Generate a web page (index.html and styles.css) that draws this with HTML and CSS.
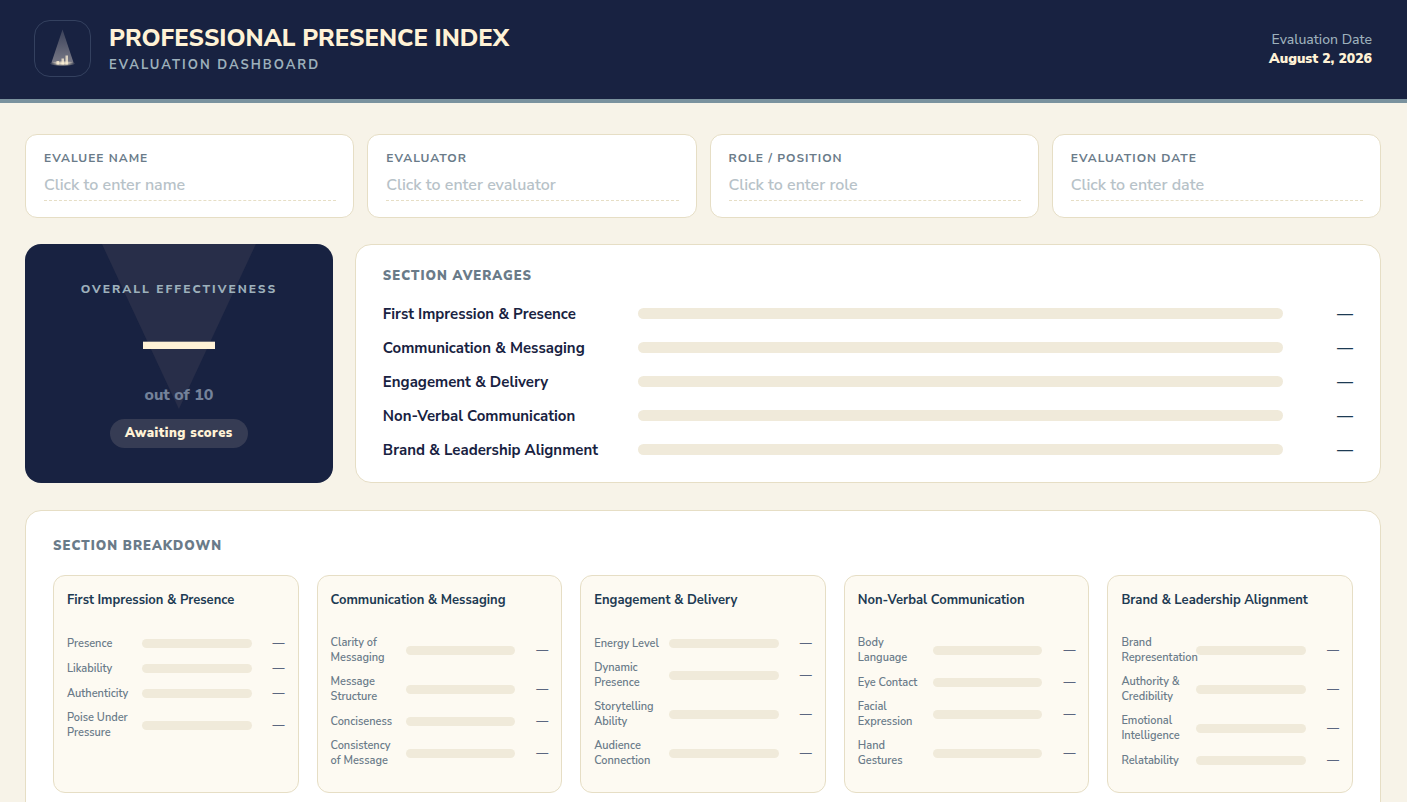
FILE: index.html
```html
<!DOCTYPE html>
<html lang="en">

<head>
    <meta charset="UTF-8">
    <meta name="viewport" content="width=device-width, initial-scale=1.0">
    <title>Professional Presence Index</title>
    <link rel="stylesheet" href="styles.css">
</head>

<body>
    <header class="header">
        <div class="logo">
            <svg width="32" height="42" viewBox="0 0 32 42" aria-hidden="true">
                <defs>
                    <linearGradient id="beam" x1="0" y1="0" x2="0" y2="1">
                        <stop offset="0" stop-color="#fff2e6" stop-opacity="0.15" />
                        <stop offset="1" stop-color="#fff2e6" stop-opacity="0.42" />
                    </linearGradient>
                    <radialGradient id="pool">
                        <stop offset="0" stop-color="#fff2d6" stop-opacity="0.9" />
                        <stop offset="0.5" stop-color="#fff2d6" stop-opacity="0.6" />
                        <stop offset="1" stop-color="#fff2d6" stop-opacity="0" />
                    </radialGradient>
                </defs>
                <path d="M15.5 1.5 L26.5 34.5 Q16 37 4.5 34.5 Z" fill="url(#beam)" />
                <ellipse cx="15.5" cy="35.5" rx="13" ry="2.8" fill="url(#pool)" />
                <g fill="#fff2d6" fill-opacity="0.75">
                    <rect x="9.5" y="33" width="2.5" height="3.5" />
                    <rect x="14.5" y="30.5" width="2.5" height="6" />
                    <rect x="18.5" y="27.5" width="2.5" height="9" />
                </g>
            </svg>
        </div>
        <div class="header_text">
            <h1>PROFESSIONAL PRESENCE INDEX</h1>
            <p>EVALUATION DASHBOARD</p>
        </div>
        <div class="header_date">
            <p>Evaluation Date</p>
            <strong>August 2, 2026</strong>
        </div>
    </header>

    <main class="page">
        <form class="fields">
            <div class="field">
                <label for="evaluee">EVALUEE NAME</label>
                <input type="text" id="evaluee" placeholder="Click to enter name">
            </div>
            <div class="field">
                <label for="evaluator">EVALUATOR</label>
                <input type="text" id="evaluator" placeholder="Click to enter evaluator">
            </div>
            <div class="field">
                <label for="role">ROLE / POSITION</label>
                <input type="text" id="role" placeholder="Click to enter role">
            </div>
            <div class="field">
                <label for="date">EVALUATION DATE</label>
                <input type="text" id="date" placeholder="Click to enter date">
            </div>
        </form>

        <div class="summary">
            <section class="overall">
                <h2>OVERALL EFFECTIVENESS</h2>
                <p class="score">—</p>
                <p class="out_of">out of 10</p>
                <span class="pill">Awaiting scores</span>
            </section>

            <section class="card averages">
                <h2 class="card_title">SECTION AVERAGES</h2>
                <div class="avg_row"><span>First Impression &amp; Presence</span><div class="track"></div><b>—</b></div>
                <div class="avg_row"><span>Communication &amp; Messaging</span><div class="track"></div><b>—</b></div>
                <div class="avg_row"><span>Engagement &amp; Delivery</span><div class="track"></div><b>—</b></div>
                <div class="avg_row"><span>Non-Verbal Communication</span><div class="track"></div><b>—</b></div>
                <div class="avg_row"><span>Brand &amp; Leadership Alignment</span><div class="track"></div><b>—</b></div>
            </section>
        </div>

        <section class="card breakdown">
            <h2 class="card_title">SECTION BREAKDOWN</h2>
            <div class="groups">
                <div class="group">
                    <h3>First Impression &amp; Presence</h3>
                    <div class="row"><span>Presence</span><div class="track"></div><b>—</b></div>
                    <div class="row"><span>Likability</span><div class="track"></div><b>—</b></div>
                    <div class="row"><span>Authenticity</span><div class="track"></div><b>—</b></div>
                    <div class="row"><span>Poise Under Pressure</span><div class="track"></div><b>—</b></div>
                </div>
                <div class="group">
                    <h3>Communication &amp; Messaging</h3>
                    <div class="row"><span>Clarity of Messaging</span><div class="track"></div><b>—</b></div>
                    <div class="row"><span>Message Structure</span><div class="track"></div><b>—</b></div>
                    <div class="row"><span>Conciseness</span><div class="track"></div><b>—</b></div>
                    <div class="row"><span>Consistency of Message</span><div class="track"></div><b>—</b></div>
                </div>
                <div class="group">
                    <h3>Engagement &amp; Delivery</h3>
                    <div class="row"><span>Energy Level</span><div class="track"></div><b>—</b></div>
                    <div class="row"><span>Dynamic Presence</span><div class="track"></div><b>—</b></div>
                    <div class="row"><span>Storytelling Ability</span><div class="track"></div><b>—</b></div>
                    <div class="row"><span>Audience Connection</span><div class="track"></div><b>—</b></div>
                </div>
                <div class="group">
                    <h3>Non-Verbal Communication</h3>
                    <div class="row"><span>Body Language</span><div class="track"></div><b>—</b></div>
                    <div class="row"><span>Eye Contact</span><div class="track"></div><b>—</b></div>
                    <div class="row"><span>Facial Expression</span><div class="track"></div><b>—</b></div>
                    <div class="row"><span>Hand Gestures</span><div class="track"></div><b>—</b></div>
                </div>
                <div class="group">
                    <h3>Brand &amp; Leadership Alignment</h3>
                    <div class="row"><span>Brand Representation</span><div class="track"></div><b>—</b></div>
                    <div class="row"><span>Authority &amp; Credibility</span><div class="track"></div><b>—</b></div>
                    <div class="row"><span>Emotional Intelligence</span><div class="track"></div><b>—</b></div>
                    <div class="row"><span>Relatability</span><div class="track"></div><b>—</b></div>
                </div>
            </div>
        </section>
    </main>
</body>

</html>
```
FILE: styles.css
```css
* {
    margin: 0;
    padding: 0;
    box-sizing: border-box;
}

body {
    font-family: "Nunito Sans", Nunito, Lato, sans-serif;
    background: #f7f3e8;
    color: #182241;
}

/* header */
.header {
    display: flex;
    align-items: center;
    gap: 18px;
    padding: 20px 35px 22px 34px;
    background: #182241;
    border-bottom: 4px solid #7a929e;
}

.logo {
    display: flex;
    align-items: center;
    justify-content: center;
    width: 57px;
    height: 57px;
    border: 1px solid #34415f;
    border-radius: 16px;
}

.header_text {
    padding-top: 2px;
}

.header_text h1 {
    font-size: 24px;
    line-height: 32px;
    font-weight: 800;
    color: #fff2d6;
}

.header_text p {
    font-size: 13px;
    line-height: 23px;
    font-weight: 700;
    letter-spacing: 2px;
    color: #9db0bb;
}

.header_date {
    margin-left: auto;
    text-align: right;
    font-size: 14px;
    line-height: 19px;
    font-weight: 500;
    color: #9db0bb;
}

.header_date strong {
    font-weight: 900;
    color: #fff2d6;
}

.page {
    padding: 31px 26px 27px 25px;
}

/* evaluee fields */
.fields {
    display: grid;
    grid-template-columns: repeat(4, 1fr);
    gap: 13px;
    margin-bottom: 26px;
}

.field {
    padding: 15px 17px 16px 18px;
    background: #fff;
    border: 1px solid #e6dec5;
    border-radius: 12px;
}

.field label {
    display: block;
    font-size: 12px;
    line-height: 16px;
    font-weight: 700;
    letter-spacing: 1px;
    color: #6a7b89;
}

.field input {
    display: block;
    width: 100%;
    height: 35px;
    padding-top: 4px;
    font-family: inherit;
    font-size: 16px;
    font-weight: 600;
    color: #182241;
    background: none;
    border: none;
    border-bottom: 1px dashed #e6dec5;
    outline: none;
}

.field input::placeholder {
    color: #b7c2c8;
}

/* overall score + averages */
.summary {
    display: grid;
    grid-template-columns: 3fr 10fr;
    gap: 22px;
    margin-bottom: 27px;
}

.overall {
    position: relative;
    padding: 35px 20px 35px;
    text-align: center;
    background: #182241;
    border-radius: 16px;
    overflow: hidden;
}

/* spotlight behind the score */
.overall::before {
    content: "";
    position: absolute;
    top: 0;
    left: 25%;
    width: 50%;
    height: 165px;
    background: #282e49;
    clip-path: polygon(0 0, 100% 0, 50% 100%);
}

.overall > * {
    position: relative;
}

.overall h2 {
    font-size: 12px;
    line-height: 20px;
    font-weight: 800;
    letter-spacing: 2px;
    color: #9db0bb;
}

.score {
    font-size: 72px;
    line-height: 85px;
    font-weight: 900;
    color: #fff2d6;
}

.out_of {
    font-size: 16px;
    line-height: 22px;
    font-weight: 800;
    margin-bottom: 13px;
    color: #74829a;
}

.pill {
    display: inline-block;
    padding: 0 15px;
    font-size: 13px;
    line-height: 29px;
    font-weight: 900;
    letter-spacing: 0.5px;
    color: #fff2d6;
    background: #363c54;
    border-radius: 15px;
}

.card {
    background: #fff;
    border: 1px solid #e6dec5;
    border-radius: 16px;
}

.card_title {
    font-size: 13px;
    line-height: 20px;
    font-weight: 900;
    letter-spacing: 1px;
    color: #6a7b89;
}

.track {
    flex: 1;
    height: 11px;
    background: #f0eada;
    border-radius: 6px;
}

.averages {
    padding: 21px 27px 15px;
}

.averages .card_title {
    margin-bottom: 10px;
}

.avg_row {
    display: flex;
    align-items: center;
    gap: 15px;
    height: 34px;
    font-size: 15px;
}

.avg_row span {
    width: 240px;
    padding-top: 1px;
    font-weight: 700;
}

.avg_row b {
    width: 55px;
    padding-top: 2px;
    font-size: 16px;
    font-weight: 800;
    text-align: right;
    color: #1d3b53;
}

/* breakdown */
.breakdown {
    padding: 25px 27px 27px;
}

.breakdown .card_title {
    margin-bottom: 19px;
}

.groups {
    display: grid;
    grid-template-columns: repeat(5, 1fr);
    gap: 18px;
}

.group {
    padding: 16px 13px 15px;
    background: #fdfaf2;
    border: 1px solid #e6dec5;
    border-radius: 12px;
}

.group h3 {
    min-height: 32px;
    margin-bottom: 11px;
    font-size: 13px;
    line-height: 16px;
    font-weight: 700;
    color: #1d3b53;
}

.row {
    display: flex;
    align-items: center;
    gap: 10px;
    margin-bottom: 9px;
    font-size: 11px;
    line-height: 15px;
}

.row span {
    width: 65px;
    font-weight: 600;
    color: #6a7b89;
}

.row .track {
    height: 9px;
}

.row b {
    width: 23px;
    font-size: 12px;
    line-height: 16px;
    font-weight: 800;
    text-align: right;
    color: #5b6680;
}
```
